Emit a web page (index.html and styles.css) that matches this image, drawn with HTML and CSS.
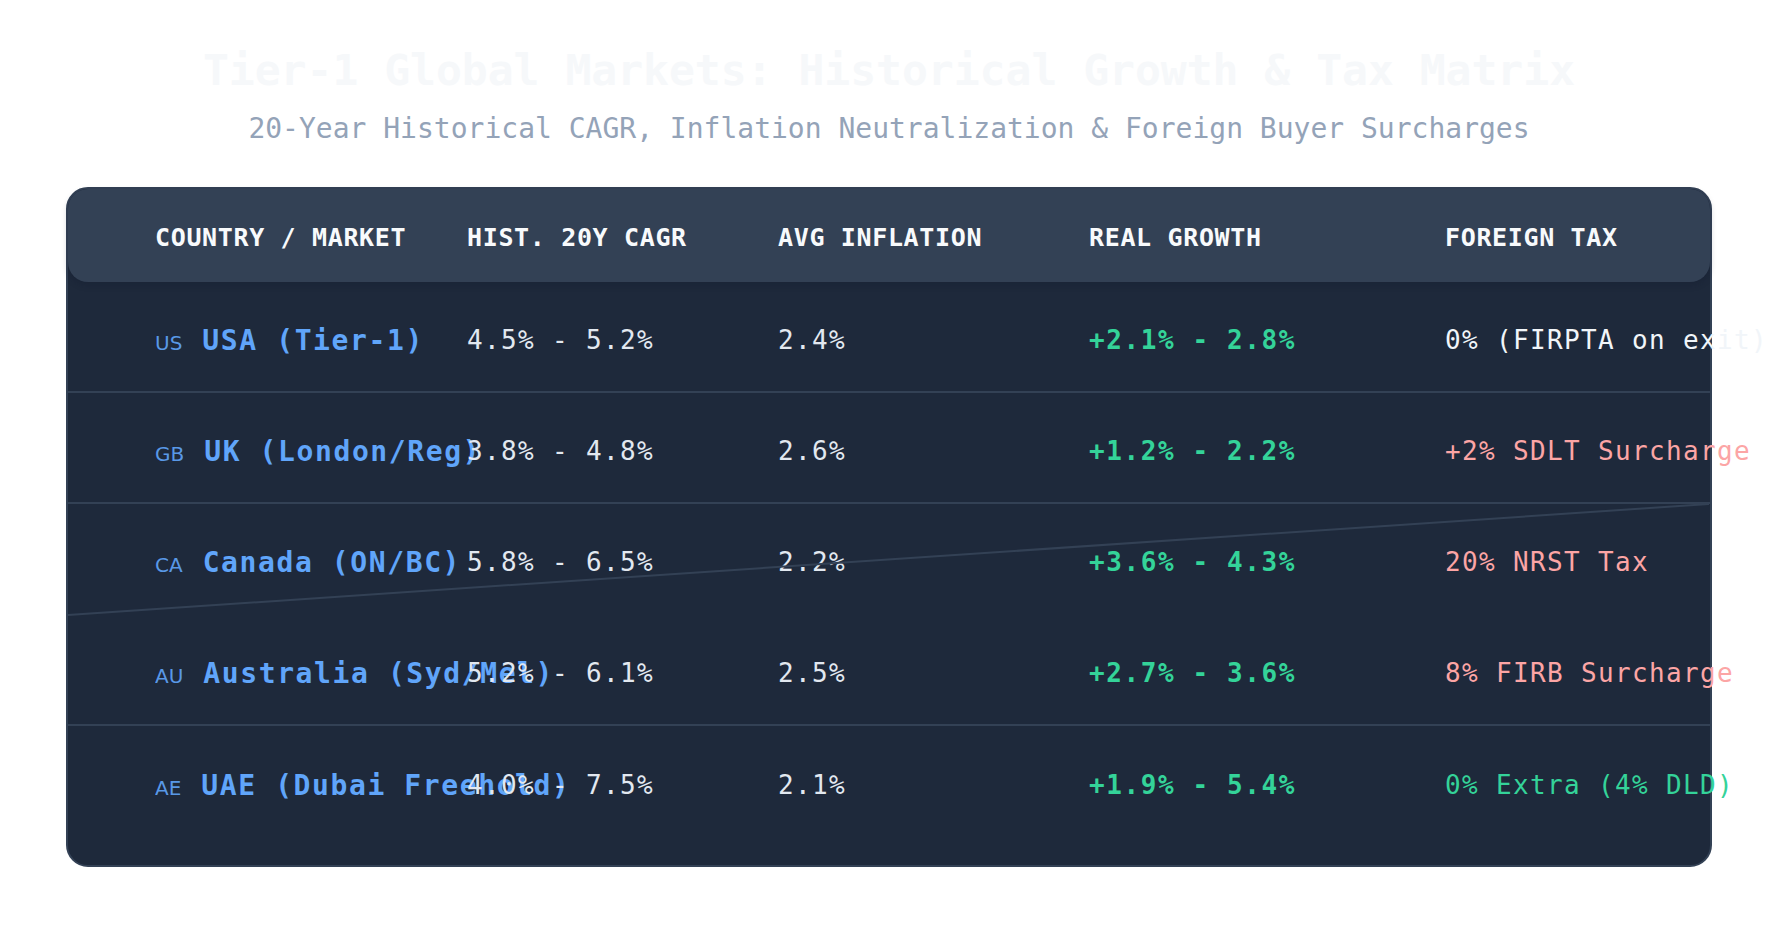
FILE: index.html
```html
<!DOCTYPE html>
<html lang="en">
<head>
<meta charset="utf-8">
<title>Tier-1 Global Markets</title>
<link rel="stylesheet" href="styles.css">
</head>
<body>
<main class="page">
  <h1 class="title">Tier-1 Global Markets: Historical Growth &amp; Tax Matrix</h1>
  <p class="subtitle">20-Year Historical CAGR, Inflation Neutralization &amp; Foreign Buyer Surcharges</p>
  <section class="card">
    <div class="thead">
      <div class="th">COUNTRY / MARKET</div>
      <div class="th">HIST. 20Y CAGR</div>
      <div class="th">AVG INFLATION</div>
      <div class="th">REAL GROWTH</div>
      <div class="th">FOREIGN TAX</div>
    </div>
    <div class="row">
      <div class="cell market"><span class="flag">US</span><span class="name">USA (Tier-1)</span></div>
      <div class="cell val">4.5% - 5.2%</div>
      <div class="cell val">2.4%</div>
      <div class="cell growth">+2.1% - 2.8%</div>
      <div class="cell tax">0% (FIRPTA on exit)</div>
    </div>
    <div class="row">
      <div class="cell market"><span class="flag">GB</span><span class="name">UK (London/Reg)</span></div>
      <div class="cell val">3.8% - 4.8%</div>
      <div class="cell val">2.6%</div>
      <div class="cell growth">+1.2% - 2.2%</div>
      <div class="cell tax tax-high">+2% SDLT Surcharge</div>
    </div>
    <div class="row row-noline">
      <div class="cell market"><span class="flag">CA</span><span class="name">Canada (ON/BC)</span></div>
      <div class="cell val">5.8% - 6.5%</div>
      <div class="cell val">2.2%</div>
      <div class="cell growth">+3.6% - 4.3%</div>
      <div class="cell tax tax-high">20% NRST Tax</div>
    </div>
    <div class="row">
      <div class="cell market"><span class="flag">AU</span><span class="name">Australia (Syd/Mel)</span></div>
      <div class="cell val">5.2% - 6.1%</div>
      <div class="cell val">2.5%</div>
      <div class="cell growth">+2.7% - 3.6%</div>
      <div class="cell tax tax-high">8% FIRB Surcharge</div>
    </div>
    <div class="row row-last">
      <div class="cell market"><span class="flag">AE</span><span class="name">UAE (Dubai Freehold)</span></div>
      <div class="cell val">4.0% - 7.5%</div>
      <div class="cell val">2.1%</div>
      <div class="cell growth">+1.9% - 5.4%</div>
      <div class="cell tax tax-low">0% Extra (4% DLD)</div>
    </div>
    <svg class="glitch" viewBox="0 0 1642 676" preserveAspectRatio="none" aria-hidden="true">
      <line x1="0" y1="426" x2="1641" y2="315" stroke="#334155" stroke-width="2"/>
    </svg>
  </section>
</main>
</body>
</html>
```

FILE: styles.css
```css
html, body {
  margin: 0;
  padding: 0;
  background: #ffffff;
}

.page {
  padding-top: 45px;
  font-family: "DejaVu Sans Mono", "Liberation Mono", monospace;
}

.title {
  margin: 0;
  text-align: center;
  font-size: 43px;
  line-height: 50px;
  font-weight: 700;
  color: #f6f8fa;
}

.subtitle {
  margin: 17px 0 0;
  text-align: center;
  font-size: 28px;
  line-height: 34px;
  font-weight: 400;
  color: #94a3b8;
}

.card {
  position: relative;
  box-sizing: border-box;
  width: 1646px;
  margin: 41px auto 0;
  background: #1e293b;
  border: 2px solid #334155;
  border-radius: 22px;
  padding-bottom: 28px;
}

.thead {
  display: grid;
  grid-template-columns: 312px 311px 311px 356px 1fr;
  align-items: center;
  box-sizing: border-box;
  height: 93px;
  padding: 3px 0 0 87px;
  background: #334155;
  border-radius: 20px;
  box-shadow: 0 3px 6px rgba(15, 23, 42, 0.25);
}

.th {
  font-size: 25px;
  font-weight: 700;
  letter-spacing: 0.65px;
  color: #f8fafc;
  white-space: nowrap;
}

.row {
  display: grid;
  grid-template-columns: 312px 311px 311px 356px 1fr;
  align-items: center;
  box-sizing: border-box;
  height: 111px;
  padding: 7px 0 0 87px;
  border-bottom: 2px solid #334155;
}

.row-noline {
  border-bottom-color: transparent;
}

.row-last {
  border-bottom: none;
}

.cell {
  white-space: nowrap;
  font-size: 26px;
  letter-spacing: 1.35px;
}

.market {
  display: flex;
  align-items: baseline;
  gap: 20px;
}

.flag {
  font-family: "DejaVu Sans", sans-serif;
  font-size: 20px;
  letter-spacing: 0;
  color: #60a5fa;
  opacity: 0.9;
}

.name {
  font-size: 28px;
  font-weight: 700;
  letter-spacing: 1.6px;
  color: #60a5fa;
}

.val {
  color: #e2e8f0;
}

.growth {
  font-weight: 700;
  letter-spacing: 1.6px;
  color: #34d399;
}

.tax {
  color: #f1f5f9;
}

.tax-high {
  color: #fca5a5;
}

.tax-low {
  color: #34d399;
}

.glitch {
  position: absolute;
  left: 0;
  top: 0;
  width: 1642px;
  height: 676px;
  pointer-events: none;
}
```
